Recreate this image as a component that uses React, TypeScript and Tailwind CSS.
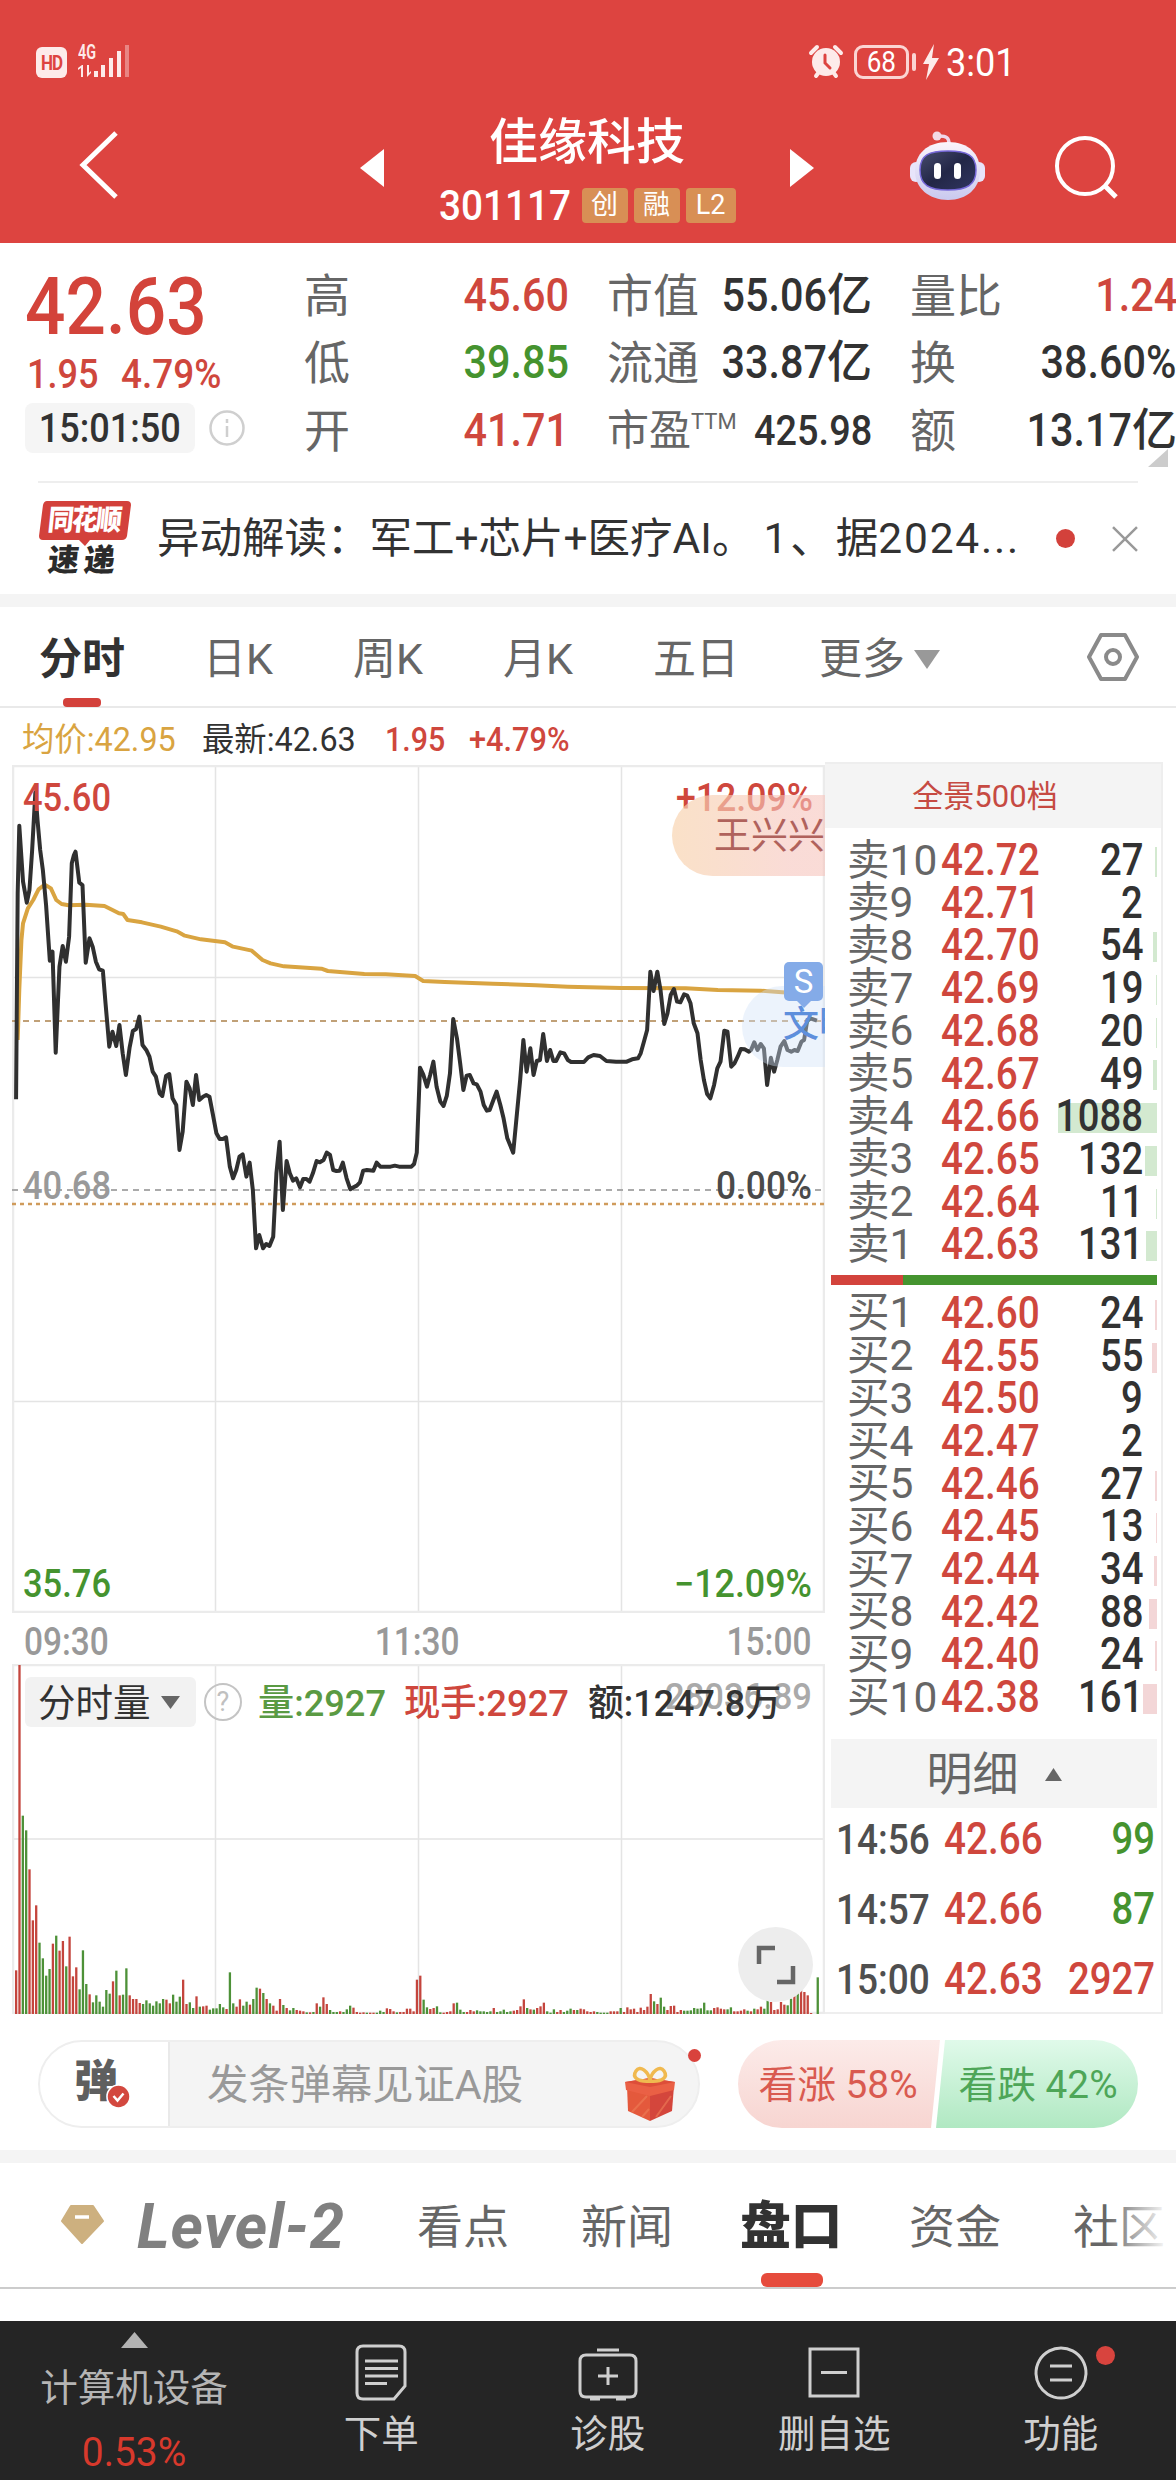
import { useState } from 'react'
import clsx from 'clsx'

interface Quote {
  label: string
  sup?: string
  value: string
  unit?: string
  color: string
}

interface Level {
  label: string
  price: string
  volume: number
  bar: number
}

const QUOTE_COLUMNS: { box: string; rows: Quote[] }[] = [
  {
    box: 'ml-[304px] w-[265px]',
    rows: [
      { label: '高', value: '45.60', color: 'text-[#cf473d]' },
      { label: '低', value: '39.85', color: 'text-[#45932f]' },
      { label: '开', value: '41.71', color: 'text-[#cf473d]' },
    ],
  },
  {
    box: 'ml-[38px] w-[265px]',
    rows: [
      { label: '市值', value: '55.06', unit: '亿', color: 'text-[#323232]' },
      { label: '流通', value: '33.87', unit: '亿', color: 'text-[#323232]' },
      { label: '市盈', sup: 'TTM', value: '425.98', color: 'text-[#323232]' },
    ],
  },
  {
    box: 'ml-[38px] w-[267px]',
    rows: [
      { label: '量比', value: '1.24', color: 'text-[#cf473d]' },
      { label: '换', value: '38.60%', color: 'text-[#323232]' },
      { label: '额', value: '13.17', unit: '亿', color: 'text-[#323232]' },
    ],
  },
]

const SELLS: Level[] = [
  { label: '卖10', price: '42.72', volume: 27, bar: 2 },
  { label: '卖9', price: '42.71', volume: 2, bar: 0 },
  { label: '卖8', price: '42.70', volume: 54, bar: 4 },
  { label: '卖7', price: '42.69', volume: 19, bar: 1 },
  { label: '卖6', price: '42.68', volume: 20, bar: 1 },
  { label: '卖5', price: '42.67', volume: 49, bar: 4 },
  { label: '卖4', price: '42.66', volume: 1088, bar: 99 },
  { label: '卖3', price: '42.65', volume: 132, bar: 12 },
  { label: '卖2', price: '42.64', volume: 11, bar: 1 },
  { label: '卖1', price: '42.63', volume: 131, bar: 11 },
]

const BUYS: Level[] = [
  { label: '买1', price: '42.60', volume: 24, bar: 2 },
  { label: '买2', price: '42.55', volume: 55, bar: 5 },
  { label: '买3', price: '42.50', volume: 9, bar: 0 },
  { label: '买4', price: '42.47', volume: 2, bar: 0 },
  { label: '买5', price: '42.46', volume: 27, bar: 2 },
  { label: '买6', price: '42.45', volume: 13, bar: 1 },
  { label: '买7', price: '42.44', volume: 34, bar: 3 },
  { label: '买8', price: '42.42', volume: 88, bar: 8 },
  { label: '买9', price: '42.40', volume: 24, bar: 2 },
  { label: '买10', price: '42.38', volume: 161, bar: 14 },
]

const DEALS = [
  { time: '14:56', price: '42.66', volume: 99, up: false },
  { time: '14:57', price: '42.66', volume: 87, up: false },
  { time: '15:00', price: '42.63', volume: 2927, up: true },
]

const PERIODS = [
  { name: '分时', box: 'w-[164px]' },
  { name: '日K', box: 'w-[150px]' },
  { name: '周K', box: 'w-[150px]' },
  { name: '月K', box: 'w-[150px]' },
  { name: '五日', box: 'w-[166px]' },
  { name: '更多', box: 'w-[130px]' },
]

const PRICE_POINTS =
  '30,418 33,-200 36,-403 43,-235 50,-172 55,-210 60,-330 66,-503 70,-420 75,-330 80,-270 86,-165 93,2 98,-25 104,278 111,20 117,-42 123,5 129,-70 134,-290 138,-315 141,-325 148,-232 154,-225 160,8 167,-65 173,-40 179,5 185,28 192,32 197,130 204,260 210,215 217,258 223,195 229,280 235,345 242,262 248,213 254,207 260,170 266,255 273,270 279,290 285,335 291,350 298,400 303,408 310,348 316,342 322,415 329,435 335,570 341,515 348,365 354,385 360,435 366,345 372,420 379,410 385,405 391,410 397,460 404,520 410,537 416,537 422,532 429,620 435,655 441,630 447,590 453,583 460,650 466,608 472,690 478,865 484,825 491,865 497,852 503,858 510,830 516,640 522,545 528,750 535,603 541,640 547,662 553,655 560,682 566,657 572,657 578,665 584,640 591,603 597,607 604,600 610,578 616,585 622,630 628,633 634,632 640,608 647,655 654,688 660,682 666,677 672,667 678,632 685,630 697,632 703,608 710,620 729,620 737,617 745,620 768,620 773,612 778,578 784,323 790,343 797,380 803,345 809,305 815,380 822,425 828,438 834,408 840,340 846,177 853,235 859,310 865,390 871,347 877,345 884,370 890,373 897,395 903,435 909,452 914,450 921,420 927,395 934,435 940,475 947,535 958,578 965,460 971,360 977,240 983,335 990,265 996,345 1002,303 1008,300 1014,222 1021,303 1027,270 1033,303 1038,303 1046,277 1053,280 1060,300 1066,306 1090,306 1098,292 1108,285 1120,288 1132,303 1150,305 1170,305 1180,298 1191,295 1196,280 1202,245 1208,210 1214,35 1220,93 1227,35 1233,90 1240,192 1246,160 1252,105 1258,87 1264,125 1270,127 1277,103 1283,107 1289,130 1295,190 1302,220 1308,300 1314,360 1320,402 1326,415 1333,375 1339,325 1345,305 1352,212 1358,215 1365,320 1371,310 1377,290 1383,267 1390,268 1398,275 1402,270 1408,247 1414,270 1420,252 1426,265 1432,375 1439,293 1445,335 1451,300 1457,260 1464,243 1470,270 1477,275 1483,270 1489,273 1496,245 1501,240 1507,180 1514,176 1525,182'

const AVERAGE_POINTS =
  '33,240 36,90 40,-60 43,-110 52,-155 62,-180 72,-212 80,-222 86,-224 95,-215 105,-180 115,-168 128,-164 160,-166 195,-162 210,-150 222,-140 230,-138 238,-120 265,-113 300,-100 330,-86 345,-73 375,-62 420,-53 435,-40 470,-28 490,0 505,10 530,19 600,26 612,33 680,42 720,43 775,48 790,63 830,66 920,71 1000,76 1060,80 1160,84 1280,85 1340,90 1420,92 1460,97 1525,103'

// one entry per minute, negative = green
const VOLUMES = [
  131, 1047, -595, -551, 434, 281, 326, -214, -167, -115, -135, 211, -235, 190, 219, -143, 232, 113, 140, -74,
  -191, -90, 59, -35, -56, -37, -22, -72, -61, 98, -130, 56, -58, -137, 56, 45, 45, 33, -30, -41,
  -32, -25, -38, -32, -45, 43, 32, -58, -37, -52, 103, 30, -35, -18, 53, -22, 23, 25, -13, -17,
  -17, -30, -20, 15, -125, -32, 22, 44, -25, -37, 28, -45, -79, 76, -63, 45, -32, 25, 10, 45,
  -27, 18, -11, -18, 12, 10, 8, -5, 5, -6, 32, -22, 50, 30, -12, -6, -6, 8, -6, -14,
  -25, 19, 6, 4, 5, -4, 4, 4, -4, -10, -6, 17, 15, 8, -5, 6, 6, 16, 16, 8,
  103, 115, -43, -20, 15, 18, -23, -5, 4, 6, 8, 32, -34, -13, -6, 6, 12, 8, -11, -8,
  -8, -6, -8, 18, -6, -8, -13, -6, -8, 10, 12, 23, 44, -18, 14, -13, 18, 23, 34, -8,
  -4, -14, 6, 12, -6, -10, -16, 12, -12, 16, 14, 8, 6, 8, -6, -4, -4, -4, 8, 8,
  8, -18, 6, 20, 14, 16, 6, 19, 12, 22, 60, -38, 30, -49, -22, 12, 24, 25, 6, 12,
  -10, -10, -11, -18, -16, -17, -34, -11, -11, 18, 20, 16, 14, -14, -20, 8, 8, 10, 14, -10,
  8, -16, 14, 22, -16, -44, 36, 12, 14, 36, 28, -26, -46, 54, -72, 75, 66, 56, 3, 0,
  -110,
]

function StatusBar() {
  return (
    <div className="flex h-[90px] items-end justify-between pl-[36px] pr-[163px] text-white">
      <div className="mb-[12px] flex h-[36px] items-end gap-[11px]">
        <span className="flex h-[31px] w-[31px] items-center justify-center rounded-[6px] bg-[#fdebea] text-[20px] font-bold tracking-tighter text-[#dd4440]">
          <span className="scale-x-[.85]">HD</span>
        </span>
        <svg width="52" height="34" viewBox="0 0 52 34" fill="#fdebea">
          <text x="0" y="15" fontSize="20" fontWeight="600" textLength="18" lengthAdjust="spacingAndGlyphs">4G</text>
          <path d="M3 33V24L0 26V24L4 21H5V33ZM9 21V33L13 29V27L11 29V21Z" />
          <path d="M16 27h4v6h-4zM23 21h4v12h-4zM31 14h4v19h-4zM39 7h4v26h-4z" />
          <path d="M47 1h4v32h-4z" opacity=".4" />
        </svg>
      </div>
      <div className="mb-[8px] flex h-[40px] items-center">
        <svg className="-ml-[1px]" width="36" height="36" viewBox="0 0 36 36" fill="none" stroke="#fdebea" strokeLinecap="round">
          <circle cx="18" cy="18" r="14" fill="#fdebea" stroke="none" />
          <path d="M3 9l6-6M33 9l-6-6M8 32l3-4M28 32l-3-4" strokeWidth="4" />
          <path d="M17 11v8l5 5" stroke="#dd4440" strokeWidth="3" />
        </svg>
        <span className="ml-[10px] flex h-[34px] w-[55px] items-center justify-center rounded-[9px] border-[3px] border-[#fbd5d3] text-[29px] leading-none">
          <span className="scale-x-[.9]">68</span>
        </span>
        <span className="ml-[3px] h-[18px] w-[4px] rounded bg-[#fbd5d3]" />
        <svg className="ml-[6px]" width="18" height="38" viewBox="0 0 18 38" fill="#fdebea">
          <path d="M12 1L1 21h6L4 37 17 15h-7Z" />
        </svg>
        <span className="ml-[6px] mt-[2px] w-[67px] origin-left scale-x-[.95] text-[38px] leading-none">3:01</span>
      </div>
    </div>
  )
}

function Header() {
  return (
    <header className="h-[243px] bg-[#dd4440]">
      <StatusBar />
      <div className="flex h-[153px] text-white">
        <svg className="ml-[76px] mt-[40px]" width="46" height="70" viewBox="0 0 46 70" fill="none" stroke="white" strokeWidth="5">
          <path d="M40 3L7 35l33 32" />
        </svg>
        <svg className="ml-[238px] mt-[59px]" width="24" height="38" viewBox="0 0 24 38" fill="white">
          <path d="M0 19L24 0v38z" />
        </svg>
        <div className="flex w-[406px] flex-col items-center pt-[22px]">
          <h1 className="text-[49px] font-medium leading-[62px]">佳缘科技</h1>
          <div className="mt-[11px] flex h-[40px] items-center gap-[6px] text-[27px]">
            <span className="mr-[1px] w-[136px] origin-left scale-x-[.9] text-[43px] font-medium leading-none">301117</span>
            <span className="flex h-[35px] w-[46px] items-center justify-center rounded-[4px] bg-[#d88f55]">创</span>
            <span className="flex h-[35px] w-[46px] items-center justify-center rounded-[4px] bg-[#d88f55]">融</span>
            <span className="flex h-[35px] w-[50px] items-center justify-center rounded-[4px] bg-[#d88f55]">L2</span>
          </div>
        </div>
        <svg className="mt-[59px]" width="24" height="38" viewBox="0 0 24 38" fill="white">
          <path d="M24 19L0 0v38z" />
        </svg>
        <svg className="ml-[95px] mt-[40px]" width="78" height="72" viewBox="0 0 78 72">
          <defs>
            <linearGradient id="helmet" x1="0" y1="0" x2="0" y2="1">
              <stop offset="0" stopColor="#fbf4fb" />
              <stop offset="1" stopColor="#c9c9ef" />
            </linearGradient>
            <linearGradient id="visor" x1="0" y1="0" x2="1" y2="1">
              <stop offset="0" stopColor="#474c6e" />
              <stop offset=".5" stopColor="#232747" />
              <stop offset="1" stopColor="#303560" />
            </linearGradient>
          </defs>
          <path d="M40 14c0-6-2-8-10-8" fill="none" stroke="#efd6ea" strokeWidth="3.5" />
          <circle cx="28" cy="6" r="4.5" fill="#f3d9e6" />
          <rect x="1" y="32" width="12" height="20" rx="6" fill="#e8e4fa" />
          <rect x="64" y="32" width="12" height="20" rx="6" fill="#e8e4fa" />
          <path d="M39 12c21 0 32 12 32 29S58 70 39 70 6 58 6 41s12-29 33-29z" fill="url(#helmet)" />
          <path d="M39 21c19 0 28 4 28 19s-9 20-28 20-28-5-28-20 9-19 28-19z" fill="url(#visor)" stroke="#7668d8" strokeWidth="1.5" />
          <rect x="25" y="33" width="7" height="16" rx="3.5" fill="white" />
          <rect x="45" y="33" width="7" height="16" rx="3.5" fill="white" />
        </svg>
        <svg className="ml-[67px] mt-[45px]" width="68" height="68" viewBox="0 0 68 68" fill="none" stroke="white" strokeWidth="4">
          <circle cx="31" cy="31" r="28" />
          <path d="M50 50l12 12" strokeWidth="5" />
        </svg>
      </div>
    </header>
  )
}

function Quotes() {
  return (
    <section className="relative h-[238px]">
      {/* current price */}
      <div className="absolute left-0 top-0 h-full w-[260px] pl-[25px] pt-[24px]">
        <div className="origin-left scale-x-[.89] text-[80px] font-medium leading-[80px] text-[#d3433a]">42.63</div>
        <div className="ml-[2px] mt-[5px] flex h-[44px] items-center text-[41px] leading-none text-[#cf473d]">
          <span className="w-[94px] origin-left scale-x-[.88] font-medium">1.95</span>
          <span className="origin-left scale-x-[.9] font-medium">4.79%</span>
        </div>
        <div className="mt-[7px] flex items-center">
          <span className="flex h-[50px] w-[170px] items-center justify-center rounded-[8px] bg-[#f5f5f5] pt-[2px] text-[41px] text-[#323232]">
            <span className="scale-x-[.88] font-medium">15:01:50</span>
          </span>
          <svg className="ml-[13px]" width="38" height="38" viewBox="0 0 38 38" fill="none" stroke="#cfcfcf" strokeWidth="2.5">
            <circle cx="19" cy="19" r="16.5" />
            <path d="M19 17v11M19 10v4" />
          </svg>
        </div>
      </div>

      <div className="flex pt-[18px]">
        {QUOTE_COLUMNS.map(col => (
          <div key={col.box} className={clsx('shrink-0', col.box)}>
            {col.rows.map(row => (
              <div key={row.label} className="flex h-[67.500px] items-center justify-between whitespace-nowrap">
                <span className="flex pt-[2px] text-[46px] leading-[60px] text-[#666]">
                  <span className={clsx(row.sup && 'text-[42px]')}>{row.label}</span>
                  {row.sup && <span className="-mt-[9px] text-[22px]">{row.sup}</span>}
                </span>
                <span className={clsx('flex items-center font-medium', row.color)}>
                  <span className={clsx('origin-right scale-x-[.88]', row.sup ? 'text-[43px]' : 'text-[47px]')}>{row.value}</span>
                  {row.unit && <span className="pt-[2px] text-[45px] leading-[60px]">{row.unit}</span>}
                </span>
              </div>
            ))}
          </div>
        ))}
      </div>
      <svg className="absolute bottom-[14px] right-[8px]" width="20" height="18" viewBox="0 0 20 18" fill="#ccc">
        <path d="M20 0v18H0z" />
      </svg>
    </section>
  )
}

function NewsLine() {
  return (
    <section className="mx-[38px] flex h-[113px] items-center border-t-2 border-[#eee]">
      <div className="relative h-[76px] w-[94px]">
        <svg className="absolute left-0 top-0" width="94" height="46" viewBox="0 0 94 46" fill="#d3413b">
          <path d="M9 0h80q4 0 4 4l-4 31q-1 4-5 4H52l-5 6-6-6H5q-4 0-4-4L5 4q1-4 4-4z" />
        </svg>
        <div className="absolute left-[10px] top-[2px] -skew-x-6 text-[26px] font-black leading-[34px] tracking-[-2px] text-white">
          <span className="inline-block origin-left scale-y-[1.1]">同花顺</span>
        </div>
        <div className="absolute left-[10px] top-[42px] -skew-x-6 text-[31px] font-black leading-[36px] tracking-[5px] text-[#2b2b2b]">速递</div>
      </div>
      <p className="ml-[25px] w-[864px] whitespace-nowrap pt-[2px] text-[42.500px] leading-none text-[#323232]">
        异动解读：军工+芯片+医疗AI。<span className="pl-[9px] tracking-[3px]">1、</span>据<span className="tracking-[1.800px]">2024...</span>
      </p>
      <span className="ml-[36px] h-[19px] w-[19px] rounded-full bg-[#d3413b]" />
      <svg className="ml-[37px]" width="26" height="26" viewBox="0 0 26 26" fill="none" stroke="#999" strokeWidth="2.5">
        <path d="M1 1l24 24M25 1L1 25" />
      </svg>
    </section>
  )
}

function PeriodTabs() {
  const [active, setActive] = useState('分时')
  return (
    <nav className="flex h-[101px] items-center border-b-2 border-[#e9e9e9] pl-[39px] text-[43px]">
      {PERIODS.map(p => (
        <button key={p.name} onClick={() => setActive(p.name)} className={clsx('relative flex h-[99px] items-center pt-[5px]', p.box)}>
          <span className={clsx('whitespace-nowrap', active === p.name ? 'font-bold text-[#323232]' : 'text-[#666]')}>{p.name}</span>
          {active === p.name && <span className="absolute -bottom-[1px] left-[24px] h-[9px] w-[38px] rounded-[4px] bg-[#d3413b]" />}
          {p.name === '更多' && (
            <svg className="ml-[9px] shrink-0" width="26" height="19" viewBox="0 0 26 19" fill="#999">
              <path d="M0 0h26L13 19z" />
            </svg>
          )}
        </button>
      ))}
      <svg className="ml-[138px]" width="52" height="48" viewBox="0 0 52 48" fill="none" stroke="#8a8a8a" strokeWidth="4" strokeLinejoin="round">
        <path d="M14 2h24l12 22-12 22H14L2 24z" />
        <circle cx="26" cy="24" r="7" />
      </svg>
    </nav>
  )
}

function PriceChart() {
  return (
    <div className="relative h-[848px] w-[813px] overflow-hidden">
      <svg width="813" height="848" viewBox="0 0 813 848" fill="none" fontFamily="Roboto, sans-serif">
        <path d="M203.500 0V848M406.500 0V848M609.500 0V848M0 212.500H813M0 636.500H813" stroke="#e4e4e4" strokeWidth="1.500" />
        <rect x="1" y="1" width="811" height="846" stroke="#ebebeb" strokeWidth="2.500" />
        <path d="M0 256H813" stroke="#c0a077" strokeWidth="2" strokeDasharray="6 5" />
        <path d="M0 425H813" stroke="#aaa" strokeWidth="2" strokeDasharray="6 5" />
        <path d="M0 439H813" stroke="#cf9b5b" strokeWidth="2.500" strokeDasharray="4 4" />
        <g transform="translate(-12 195) scale(.5357 .3333)" strokeLinejoin="round">
          <polyline points={AVERAGE_POINTS} stroke="#d9a441" strokeWidth="4" vectorEffect="non-scaling-stroke" />
          <polyline points={PRICE_POINTS} stroke="#303030" strokeWidth="4" vectorEffect="non-scaling-stroke" />
        </g>
        <g fontSize="38" fontWeight="500">
          <text x="11" y="46" fill="#cf473d" textLength="88" lengthAdjust="spacingAndGlyphs">45.60</text>
          <text x="664" y="46" fill="#cf473d" textLength="137" lengthAdjust="spacingAndGlyphs">+12.09%</text>
          <text x="11" y="434" fill="#999" textLength="88" lengthAdjust="spacingAndGlyphs">40.68</text>
          <text x="704" y="434" fill="#4a4a4a" textLength="96" lengthAdjust="spacingAndGlyphs">0.00%</text>
          <text x="11" y="832" fill="#45932f" textLength="88" lengthAdjust="spacingAndGlyphs">35.76</text>
          <text x="662" y="832" fill="#45932f" textLength="138" lengthAdjust="spacingAndGlyphs">−12.09%</text>
        </g>
      </svg>
      {/* floating comments, cut off at the right edge */}
      <div className="absolute left-[660px] top-[30px] h-[81px] w-[200px] whitespace-nowrap rounded-l-full bg-linear-to-r from-[#f8d4b0]/70 to-[#f6c4bc]/60 to-60% pl-[42px] text-[37px] leading-[83px] text-[#b0625c]">
        王兴兴
      </div>
      <div className="absolute left-[730px] top-[221px] h-[81px] w-[140px] whitespace-nowrap rounded-l-full bg-[#cfe1f7]/40 pl-[41px] text-[36px] font-medium leading-[78px] text-[#5e8fdc]">
        文明
      </div>
      <div className="absolute left-[772px] top-[197px] flex h-[39px] w-[39px] items-center justify-center rounded-[5px] bg-[#84abe8] text-[33px] text-white">
        S
        <span className="absolute left-[12px] top-[38px] h-0 w-0 border-x-[8px] border-t-[8px] border-x-transparent border-t-[#84abe8]" />
      </div>
    </div>
  )
}

function VolumeChart() {
  return (
    <div className="relative h-[350px] w-[813px]">
      <svg width="813" height="350" viewBox="0 0 813 350" fill="none" fontFamily="Roboto, 'Noto Sans CJK SC', sans-serif">
        <path d="M203.500 0V350M406.500 0V350M609.500 0V350M0 175H813" stroke="#e4e4e4" strokeWidth="1.500" />
        <rect x="1" y="1" width="811" height="348" stroke="#ebebeb" strokeWidth="2.500" />
        {VOLUMES.map((v, i) => (
          <rect key={i} x={3 + i * 3.34} y={350 - Math.abs(v) / 3} width="2.300" height={Math.abs(v) / 3} fill={v > 0 ? '#c4453d' : '#4d9138'} />
        ))}
        <g fontSize="37" fontWeight="500">
          <text x="653" y="45" fill="#aaa" textLength="147" lengthAdjust="spacingAndGlyphs">28036.89</text>
          <text x="246" y="52" fill="#5a9a43" textLength="128" lengthAdjust="spacingAndGlyphs">量:2927</text>
          <text x="392" y="52" fill="#cf473d" textLength="165" lengthAdjust="spacingAndGlyphs">现手:2927</text>
          <text x="576" y="52" fill="#323232" textLength="193" lengthAdjust="spacingAndGlyphs">额:1247.8万</text>
        </g>
      </svg>
      <button className="absolute left-[13px] top-[13px] flex h-[50px] w-[171px] items-center rounded-[6px] bg-[#f2f2f2] pl-[13px] pt-[3px] text-[37.500px] text-[#323232]">
        分时量
        <svg className="-mt-[3px] ml-[10px]" width="19" height="13" viewBox="0 0 19 13" fill="#666">
          <path d="M0 0h19L9.500 13z" />
        </svg>
      </button>
      <span className="absolute left-[192px] top-[19px] flex h-[38px] w-[38px] items-center justify-center rounded-full border-[2.500px] border-[#c4c4c4] text-[27px] text-[#c0c0c0]">
        ?
      </span>
      <span className="absolute left-[726px] top-[263px] flex h-[75px] w-[75px] items-center justify-center rounded-full bg-[#ededed]">
        <svg width="40" height="40" viewBox="0 0 40 40" fill="none" stroke="#666" strokeWidth="4.500">
          <path d="M3 19V3h16M37 21v16H21" />
        </svg>
      </span>
    </div>
  )
}

function LevelRow({ level, side }: { level: Level; side: 'sell' | 'buy' }) {
  return (
    <div className="flex h-[42.700px] items-center pl-[22px] pr-[4px] leading-none">
      <span className="w-[94px] whitespace-nowrap pt-[3px] text-[42.500px] text-[#666]">{level.label}</span>
      <span className="w-[96px] origin-left scale-x-[.89] pt-[3px] text-[43.500px] font-medium text-[#cf473d]">{level.price}</span>
      <div className="relative flex h-full flex-1 items-center justify-end pr-[14px]">
        <span
          className={clsx('absolute right-0 top-[9px] h-[30px]', side === 'sell' ? 'bg-[#d3e9d0]' : 'bg-[#f3d6d7]')}
          style={{ width: level.bar }}
        />
        <span className="relative origin-right scale-x-[.88] pt-[3px] text-[43.500px] font-medium text-[#323232]">{level.volume}</span>
      </div>
    </div>
  )
}

function OrderBook() {
  return (
    <aside className="h-[1252px] w-[338px] border-2 border-l-0 border-[#eee]">
      <div className="flex h-[64px] items-center justify-center bg-[#f4f4f4] pr-[16px] pt-[2px] text-[31px] text-[#c64a42]">全景500档</div>
      <div className="pt-[10px]">
        {SELLS.map(l => (
          <LevelRow key={l.label} level={l} side="sell" />
        ))}
      </div>
      <div className="ml-[6px] mr-[4px] mt-[10px] flex h-[10px] bg-[#45942f]">
        <div className="w-[72px] bg-[#d3433c]" />
      </div>
      <div className="pt-[6px]">
        {BUYS.map(l => (
          <LevelRow key={l.label} level={l} side="buy" />
        ))}
      </div>
      <div className="ml-[6px] mr-[4px] mt-[21px] flex h-[69px] items-center justify-center gap-[26px] bg-[#f4f4f4] pt-[3px] text-[46px] text-[#666]">
        明细
        <svg width="17" height="13" viewBox="0 0 17 13" fill="#666">
          <path d="M8.500 0L17 13H0z" />
        </svg>
      </div>
      <div className="flex flex-col gap-[10px] pl-[11px] pr-[6px] pt-[2px] text-[43.500px] font-medium leading-none">
        {DEALS.map(d => (
          <div key={d.time} className="flex h-[60px] items-center">
            <span className="w-[108px] origin-left scale-x-[.88] text-[42px] text-[#4f4f4f]">{d.time}</span>
            <span className="w-[96px] origin-left scale-x-[.89] text-[#cf473d]">{d.price}</span>
            <span className={clsx('flex-1 origin-right scale-x-[.88] text-right', d.up ? 'text-[#cf473d]' : 'text-[#45932f]')}>{d.volume}</span>
          </div>
        ))}
      </div>
    </aside>
  )
}

function CommentBar() {
  return (
    <section className="flex h-[136px] px-[38px] pt-[26px]">
      <div className="relative flex h-[88px] w-[662px] items-center rounded-full border-2 border-[#eee] bg-[#f4f4f4]">
        <div className="relative flex h-full w-[130px] items-center rounded-l-full border-r-2 border-[#e9e9e9] bg-white pl-[34px] text-[44px] font-black text-[#5f5f5f]">
          <span className="-mt-[4px]">弹</span>
          <svg className="absolute left-[66px] top-[42px]" width="25" height="25" viewBox="0 0 25 25">
            <circle cx="12.500" cy="12.500" r="11.500" fill="#d3483f" stroke="white" strokeWidth="1.500" />
            <path d="M7.500 12l4 4.500 6-7" fill="none" stroke="white" strokeWidth="2.500" />
          </svg>
        </div>
        <span className="ml-[37px] pt-[3px] text-[41.300px] text-[#999]">发条弹幕见证A股</span>
        <svg className="absolute left-[584px] top-[24px]" width="54" height="56" viewBox="0 0 54 56">
          <path d="M3 20l23 6v29L4 45z" fill="#e4593c" />
          <path d="M50 20l-24 6v29l22-10z" fill="#d4463c" />
          <path d="M1 16l25-4 25 4-1 8-24 6-24-6z" fill="#ea6045" />
          <path d="M1 16l25-4 25 4-25 5z" fill="#dd4e39" />
          <path d="M8 46l15-16M32 51l15-21M18 51l7-8" stroke="#ef7f58" strokeWidth="2" opacity=".6" />
          <path d="M26 15C13 16 8 11 12 5s12 0 14 9c2-9 10-15 14-9s-1 11-14 10z" fill="none" stroke="#f0b94f" strokeWidth="3.500" />
        </svg>
        <span className="absolute left-[648px] top-[7px] h-[13px] w-[13px] rounded-full bg-[#d9423c]" />
      </div>

      <div className="relative ml-[38px] flex h-[88px] w-[400px] overflow-hidden rounded-full text-[38px]">
        <svg className="absolute inset-0" width="400" height="88" viewBox="0 0 400 88">
          <defs>
            <linearGradient id="bull" x1="0" y1="0" x2="0" y2="1">
              <stop offset="0" stopColor="#fcebe9" />
              <stop offset="1" stopColor="#f7d5d1" />
            </linearGradient>
            <linearGradient id="bear" x1="0" y1="0" x2="0" y2="1">
              <stop offset="0" stopColor="#e0faea" />
              <stop offset="1" stopColor="#b0e8c2" />
            </linearGradient>
          </defs>
          <path d="M0 0h202l-9 88H0z" fill="url(#bull)" />
          <path d="M207 0h193v88H198z" fill="url(#bear)" />
        </svg>
        <button className="relative w-[200px] origin-center scale-x-[1.02] whitespace-nowrap pt-[2px] text-[#d95a50]">看涨 58%</button>
        <button className="relative w-[200px] origin-center scale-x-[1.02] whitespace-nowrap pt-[2px] text-[#4ea658]">看跌 42%</button>
      </div>
    </section>
  )
}

function SectionTabs() {
  return (
    <nav className="relative flex h-[126px] items-center overflow-hidden whitespace-nowrap border-b-2 border-[#ccc] pl-[60px] text-[46px] text-[#666]">
      <svg width="45" height="42" viewBox="0 0 45 42">
        <path d="M11 2h22l10 15-21 22L2 17z" fill="#cdb07f" stroke="#cdb07f" strokeWidth="2" strokeLinejoin="round" />
        <path d="M15 13h14" stroke="white" strokeWidth="3.500" />
      </svg>
      <span className="ml-[32px] w-[280px] origin-left pt-[4px] text-[62px] font-bold italic leading-none tracking-[1px] text-[#808080]">Level-2</span>
      <span className="w-[164px] pt-[4px]">看点</span>
      <span className="w-[159px] pt-[4px]">新闻</span>
      <span className="relative flex h-full w-[169px] items-center pt-[4px] text-[51px] font-black text-[#323232]">
        盘口
        <span className="absolute bottom-0 left-[21px] h-[14px] w-[62px] rounded-[6px] bg-[#e64b3c]" />
      </span>
      <span className="w-[164px] pt-[4px]">资金</span>
      <span className="pt-[4px]">社区</span>
      <div className="absolute right-0 top-0 h-full w-[70px] bg-linear-to-r from-white/0 to-white to-90%" />
    </nav>
  )
}

function BottomNav() {
  const items = [
    {
      name: '下单',
      icon: <path d="M6 4h36q6 0 6 6v34L37 57H6q-6 0-6-6V10q0-6 6-6zM8 19h33M8 26.500h33M8 34h33M8 41.500h22" />,
    },
    {
      name: '诊股',
      icon: <path d="M2 13h44q6 0 6 6v30q0 6-6 6H2q-6 0-6-6V19q0-6 6-6zM13 8h22M24 25v18M14 34h20M6 57h10M32 57h10" />,
    },
    { name: '删自选', icon: <path d="M0 7h48v47H0zM11 30.500h26" /> },
    { name: '功能', icon: <path d="M24 6a25 25 0 1 0 .01 0M13 24h22M13 38h22" />, dot: true },
  ]
  return (
    <footer className="flex h-[159px] bg-[#252525] text-[37.500px] text-[#cfcfcf]">
      <div className="flex w-[268px] flex-col items-center pt-[11px] text-[#b5b5b5]">
        <svg width="27" height="16" viewBox="0 0 27 16" fill="#b3b3b3">
          <path d="M13.500 0L27 16H0z" />
        </svg>
        <span className="mt-[16px] leading-[48px]">计算机设备</span>
        <span className="mt-[16px] scale-x-[.95] text-[41px] leading-[48px] text-[#d8392c]">0.53%</span>
      </div>
      {items.map(item => (
        <button key={item.name} className="relative flex w-[226.500px] flex-col items-center pt-[21px]">
          <svg width="48" height="60" viewBox="0 0 48 60" overflow="visible" fill="none" stroke="#cfcfcf" strokeWidth="3">
            {item.icon}
          </svg>
          <span className="mt-[8px] leading-[48px]">{item.name}</span>
          {item.dot && <span className="absolute left-[148px] top-[25px] h-[19px] w-[19px] rounded-full bg-[#d8443e]" />}
        </button>
      ))}
    </footer>
  )
}

export default function App() {
  return (
    <div className="h-[2480px] w-[1176px] overflow-hidden bg-white font-[Roboto,'Noto_Sans_CJK_SC',sans-serif]">
      <Header />
      <Quotes />
      <NewsLine />
      <div className="h-[13px] bg-[#f4f4f4]" />
      <PeriodTabs />

      <main className="flex h-[1306px] pl-[12px]">
        <div className="w-[813px]">
          <div className="flex h-[57px] items-center whitespace-nowrap pl-[10px] pt-[5px] text-[33px] leading-none">
            <span className="w-[180px] origin-left scale-x-[.98] text-[#d9a441]">均价:42.95</span>
            <span className="w-[183px] origin-left scale-x-[.98] text-[#323232]">最新:42.63</span>
            <span className="w-[84px] origin-left scale-x-[.92] font-medium text-[#cf473d]">1.95</span>
            <span className="origin-left scale-x-[.93] font-medium text-[#cf473d]">+4.79%</span>
          </div>
          <PriceChart />
          <div className="flex h-[51px] items-center justify-between pl-[12px] pr-[14px] pt-[6px] text-[38px] font-medium leading-none text-[#999]">
            <span className="origin-left scale-x-[.88]">09:30</span>
            <span className="scale-x-[.88]">11:30</span>
            <span className="origin-right scale-x-[.88]">15:00</span>
          </div>
          <VolumeChart />
        </div>
        <div className="mt-[54px]">
          <OrderBook />
        </div>
      </main>

      <CommentBar />
      <div className="h-[13px] bg-[#f4f4f4]" />
      <SectionTabs />
      <div className="h-[32px]" />
      <BottomNav />
    </div>
  )
}
